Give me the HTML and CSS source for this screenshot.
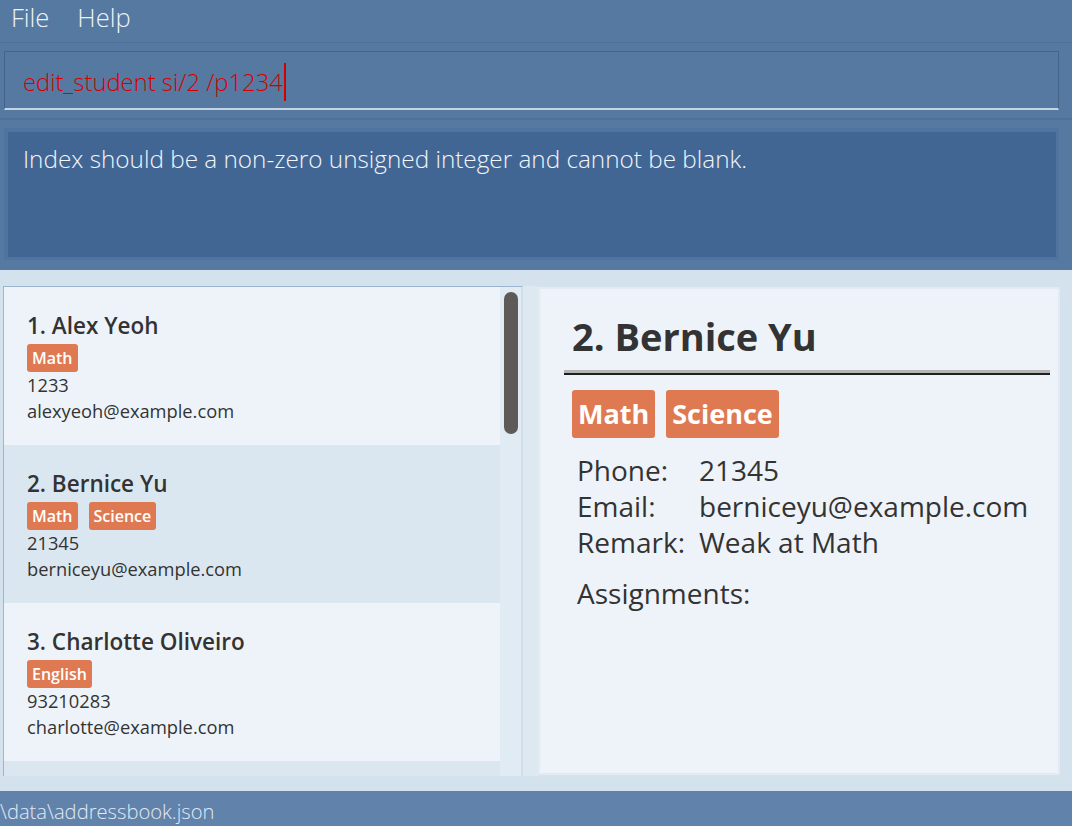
FILE: index.html
```html
<!DOCTYPE html>
<html lang="en">
<head>
<meta charset="utf-8">
<title>Address App</title>
<link rel="stylesheet" href="styles.css">
</head>
<body>
<div class="app">
  <div class="menubar">
    <span class="menu-item">File</span>
    <span class="menu-item">Help</span>
  </div>
  <div class="command-section">
    <div class="command-box">
      <span class="cmd-text">edit_student si/2 /p1234</span><span class="caret"></span>
    </div>
  </div>
  <div class="result-section">
    <div class="result-outer">
      <div class="result-inner">Index should be a non-zero unsigned integer and cannot be blank.</div>
    </div>
  </div>
  <div class="main">
    <div class="list-panel">
      <div class="list-cells">
        <div class="cell">
          <div class="cell-name">1. Alex Yeoh</div>
          <div class="tags"><span class="tag">Math</span></div>
          <div class="cell-line">1233</div>
          <div class="cell-line">alexyeoh@example.com</div>
        </div>
        <div class="cell cell-alt">
          <div class="cell-name">2. Bernice Yu</div>
          <div class="tags"><span class="tag">Math</span><span class="tag">Science</span></div>
          <div class="cell-line">21345</div>
          <div class="cell-line">berniceyu@example.com</div>
        </div>
        <div class="cell">
          <div class="cell-name">3. Charlotte Oliveiro</div>
          <div class="tags"><span class="tag">English</span></div>
          <div class="cell-line">93210283</div>
          <div class="cell-line">charlotte@example.com</div>
        </div>
        <div class="cell cell-alt cell-partial"></div>
      </div>
      <div class="scroll-track"><div class="scroll-thumb"></div></div>
    </div>
    <div class="gap-strip"></div>
    <div class="detail-panel">
      <div class="detail-name">2. Bernice Yu</div>
      <div class="detail-rule"></div>
      <div class="detail-tags"><span class="dtag">Math</span><span class="dtag">Science</span></div>
      <div class="fields">
        <span class="flabel">Phone:</span><span class="fvalue">21345</span>
        <span class="flabel">Email:</span><span class="fvalue">berniceyu@example.com</span>
        <span class="flabel">Remark:</span><span class="fvalue">Weak at Math</span>
      </div>
      <div class="assign">Assignments:</div>
    </div>
  </div>
  <div class="footer">\data\addressbook.json</div>
</div>
</body>
</html>
```

FILE: styles.css
```css
* { box-sizing: border-box; }
html, body { margin: 0; padding: 0; }
body {
  width: 1072px;
  height: 826px;
  overflow: hidden;
  background: #d4e2ed;
  font-family: "Open Sans", "Noto Sans", sans-serif;
}
.app {
  display: flex;
  flex-direction: column;
  width: 1072px;
  height: 826px;
}
.menubar {
  height: 43px;
  background: #5679a2;
  display: flex;
  align-items: center;
  gap: 28px;
  padding: 0 0 8px 11px;
  border-bottom: 1px solid #4f7199;
}
.menu-item {
  color: #eef2f7;
  font-size: 25.5px;
  font-weight: 300;
}
.command-section {
  height: 77px;
  background: #5679a2;
  padding: 8px 13px 0 4px;
  border-bottom: 2px solid #4f7098;
}
.command-box {
  height: 59px;
  border: 1px solid #44648c;
  border-bottom: 2px solid #c6d4e4;
  display: flex;
  align-items: center;
  padding: 3px 0 0 18px;
}
.cmd-text {
  color: #d40000;
  font-size: 23.8px;
  font-weight: 300;
}
.caret {
  width: 2px;
  height: 38px;
  background: #d40000;
  margin-left: 1px;
}
.result-section {
  height: 150px;
  background: #5679a2;
  padding: 8px 13px 10px 4px;
}
.result-outer {
  height: 132px;
  background: #4f74a0;
  padding: 4px 3px 3px 4px;
}
.result-inner {
  height: 100%;
  background: #426694;
  color: #f2f5f9;
  font-size: 24.3px;
  font-weight: 300;
  padding: 10px 0 0 15px;
}
.main {
  flex: 1;
  display: flex;
  align-items: flex-start;
  padding: 16px 0 0 3px;
}
.list-panel {
  width: 520px;
  height: 490px;
  border: 1px solid #9cb5ce;
  border-right-color: #cfdeea;
  border-bottom: none;
  display: flex;
  overflow: hidden;
  background: #e1ebf3;
}
.list-cells {
  width: 496px;
  display: flex;
  flex-direction: column;
}
.cell {
  height: 158px;
  flex: none;
  background: #eef3fa;
  padding: 24px 0 0 23px;
  color: #333333;
}
.cell-alt { background: #dbe7f0; }
.cell-partial { height: 16px; }
.cell-name {
  font-size: 22.5px;
  font-weight: 600;
  line-height: 30px;
}
.tags {
  display: flex;
  gap: 11px;
  margin-top: 3px;
}
.tag {
  background: #df7951;
  color: #ffffff;
  font-size: 16px;
  font-weight: 600;
  line-height: 28px;
  padding: 0 5px;
  border-radius: 3px;
}
.cell-line {
  font-size: 18.3px;
  line-height: 26px;
}
.scroll-track {
  width: 22px;
  padding: 5px 3px 0 4px;
  border-right: 1px solid #d3e0ec;
}
.scroll-thumb {
  height: 142px;
  background: #5e5a57;
  border-radius: 7px;
}
.gap-strip {
  width: 15px;
  height: 490px;
  background: #dde8f1;
}
.detail-panel {
  width: 522px;
  height: 488px;
  margin-top: 1px;
  background: #eef3fa;
  border: 2px solid #e2ebf4;
  padding: 22px 8px 0 24px;
  color: #333333;
}
.detail-name {
  font-size: 38px;
  font-weight: 700;
  line-height: 50px;
  padding-left: 8px;
}
.detail-rule {
  height: 5px;
  border-top: 3px solid #b4b4b4;
  border-bottom: 2px solid #1e1e1e;
  margin-top: 9px;
}
.detail-tags {
  display: flex;
  gap: 11px;
  margin-top: 15px;
  padding-left: 8px;
}
.dtag {
  background: #df7951;
  color: #ffffff;
  font-size: 27px;
  font-weight: 700;
  line-height: 48px;
  padding: 0 6px;
  border-radius: 3px;
}
.fields {
  display: grid;
  grid-template-columns: 122px auto;
  margin-top: 14px;
  padding-left: 13px;
  font-size: 28px;
  line-height: 36px;
}
.assign {
  font-size: 28px;
  line-height: 36px;
  margin-top: 15px;
  padding-left: 13px;
}
.footer {
  height: 35px;
  background: #6082ab;
  color: #e2e9f2;
  font-size: 20.2px;
  font-weight: 300;
  line-height: 35px;
  padding-top: 3px;
}
```
